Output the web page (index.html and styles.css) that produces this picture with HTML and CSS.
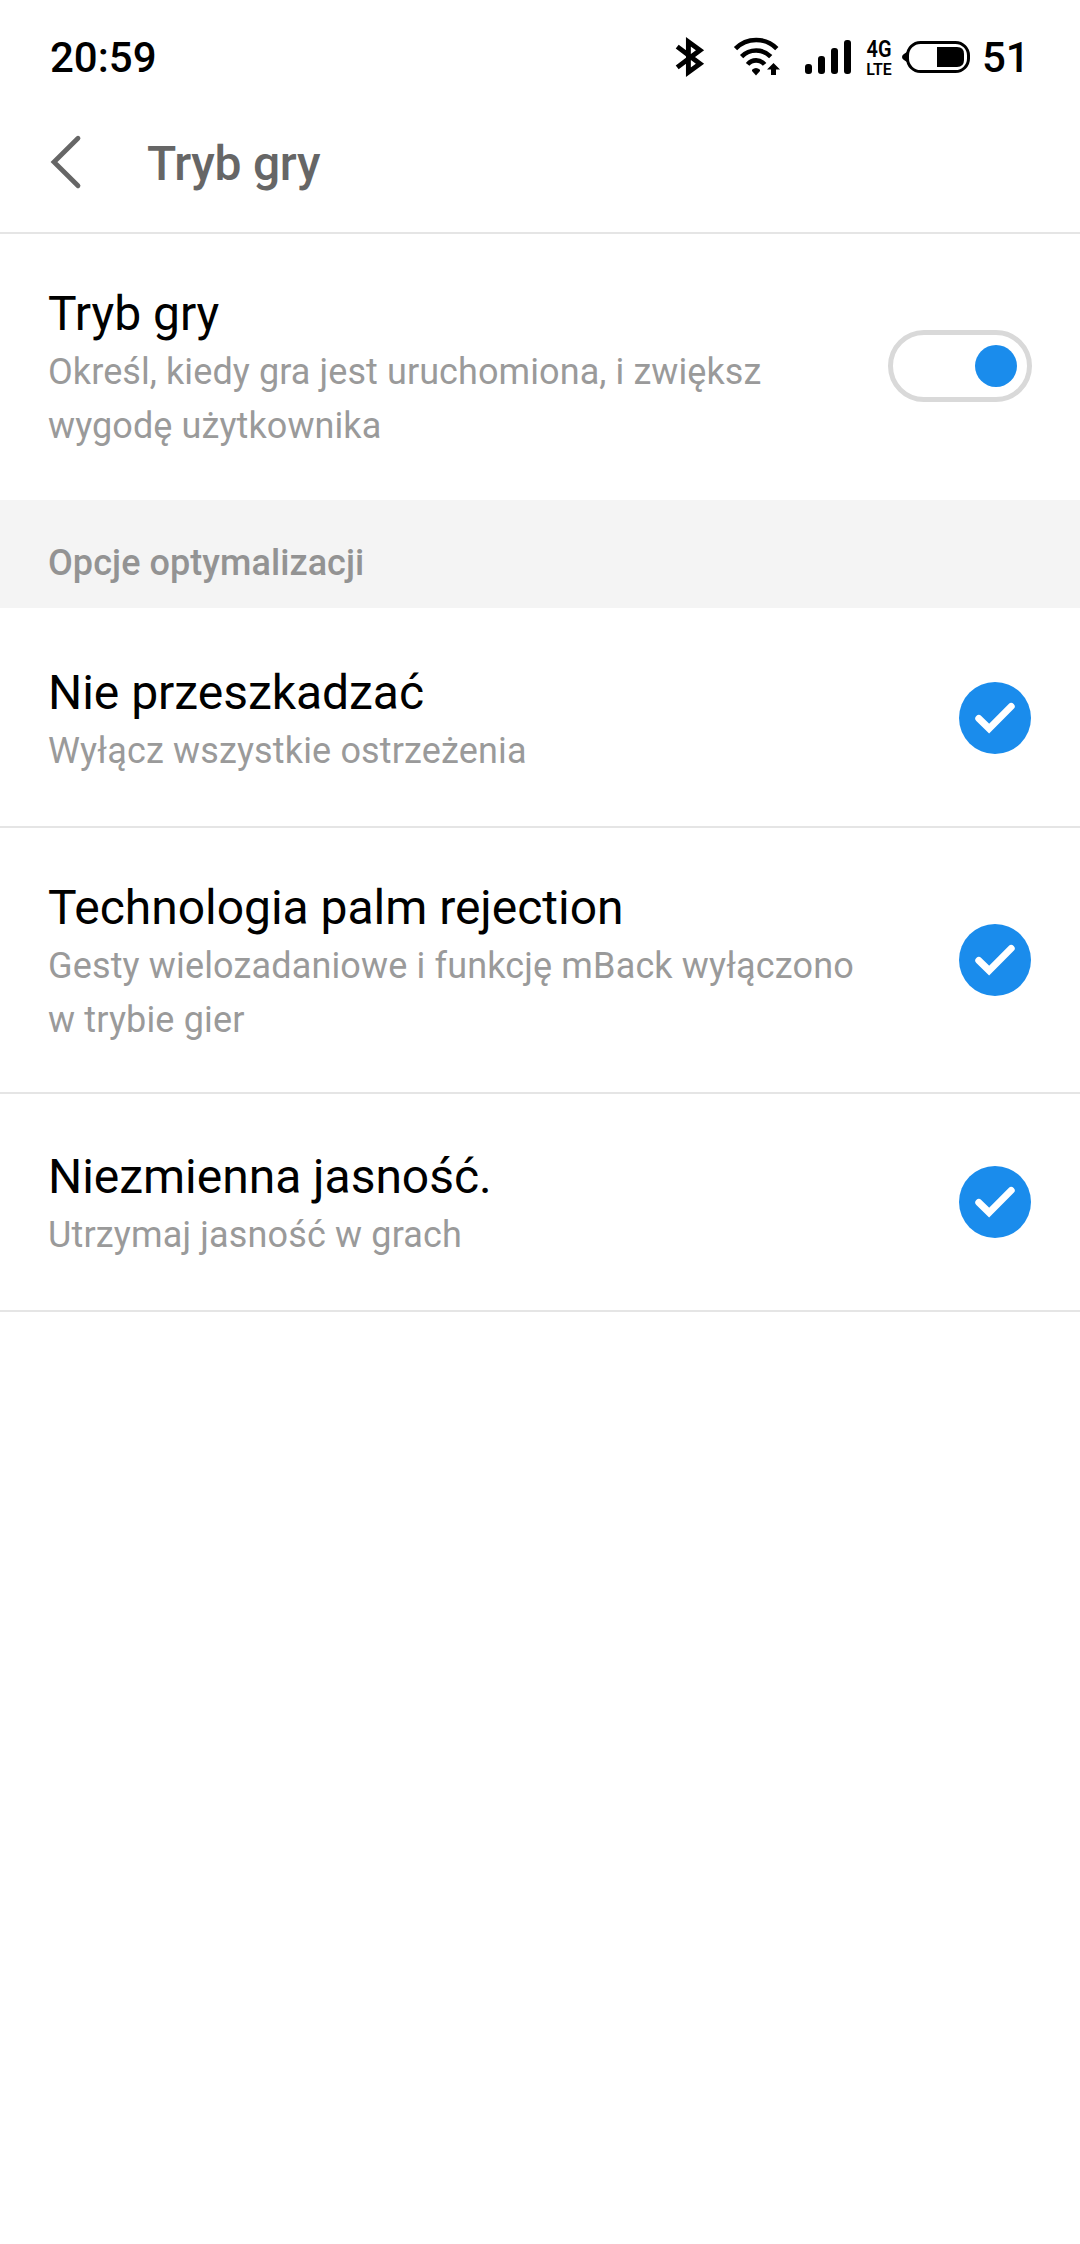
FILE: index.html
```html
<!DOCTYPE html>
<html lang="pl">
<head>
<meta charset="utf-8">
<title>Tryb gry</title>
<link rel="stylesheet" href="styles.css">
</head>
<body>
<svg width="0" height="0" class="defs">
  <symbol id="check" viewBox="0 0 72 72">
    <circle cx="36" cy="36" r="36" fill="#1a8cec"/>
    <path d="M19.8 36.4 30.1 46.6 52.2 24.4" fill="none" stroke="#fff" stroke-width="7" stroke-linecap="round"/>
  </symbol>
</svg>
<div class="statusbar">
  <span class="time">20:59</span>
  <div class="status-icons">
    <svg class="icon-bt" width="32" height="44" viewBox="674 35 32 44"><path d="M677.2 46.6 700 63.7 688.4 72.2V41.8L700 50.3 677.2 67.4" fill="none" stroke="#000" stroke-width="4.9"/></svg>
    <svg class="icon-wifi" width="50" height="44" viewBox="732 35 50 44">
      <g fill="none" stroke="#000" stroke-width="4.6">
        <path d="M735.5 48.6A29 29 0 0 1 776.8 48.6"/>
        <path d="M741.6 56.6A20.5 20.5 0 0 1 770.7 56.6"/>
        <path d="M747.6 64.4A11 11 0 0 1 764.6 64.4"/>
      </g>
      <path d="M752 69.8Q756 66.4 760 69.8V71L756 75.4 752 71Z"/>
      <path d="M773.5 63 780 69.5H776V75H771V69.5H767Z"/>
    </svg>
    <svg class="icon-signal" width="48" height="44" viewBox="804 35 48 44">
      <rect x="805" y="64" width="7" height="10" rx="3"/>
      <rect x="818" y="56" width="7" height="18" rx="3"/>
      <rect x="831" y="48" width="7" height="26" rx="3"/>
      <rect x="844" y="40" width="7" height="34" rx="3"/>
    </svg>
    <svg class="icon-net" width="28" height="50" viewBox="865 32 28 50">
      <text x="866.5" y="57" font-size="23" textLength="25" lengthAdjust="spacingAndGlyphs">4G</text>
      <text x="866.2" y="74.5" font-size="16.5" textLength="25.5" lengthAdjust="spacingAndGlyphs">LTE</text>
    </svg>
    <svg class="icon-battery" width="70" height="44" viewBox="901 35 70 44">
      <rect x="907.5" y="42.5" width="61" height="29" rx="13" fill="none" stroke="#000" stroke-width="3"/>
      <path d="M908 51.5Q906.5 52 903.6 54.2 902 55.4 902 57T903.6 59.8Q906.5 62 908 62.5Z"/>
      <path d="M937 47H957Q964 47 964 54V60Q964 67 957 67H937Z"/>
    </svg>
    <span class="level">51</span>
  </div>
</div>
<header class="header">
  <svg class="back" width="34" height="56" viewBox="48 134 34 56"><path d="M78 138.3 54 162 78 185.7" fill="none" stroke="#666" stroke-width="4.8" stroke-linecap="round"/></svg>
  <h1 class="header-title">Tryb gry</h1>
</header>
<main>
  <div class="row row-main">
    <div class="text"><div class="title">Tryb gry</div><div class="sub">Określ, kiedy gra jest uruchomiona, i zwiększ<br>wygodę użytkownika</div></div>
    <div class="switch"><div class="knob"></div></div>
  </div>
  <h2 class="section">Opcje optymalizacji</h2>
  <div class="row row-first">
    <div class="text"><div class="title">Nie przeszkadzać</div><div class="sub">Wyłącz wszystkie ostrzeżenia</div></div>
    <svg class="check"><use href="#check"/></svg>
  </div>
  <div class="row">
    <div class="text"><div class="title">Technologia palm rejection</div><div class="sub">Gesty wielozadaniowe i funkcję mBack wyłączono<br>w trybie gier</div></div>
    <svg class="check"><use href="#check"/></svg>
  </div>
  <div class="row row-last">
    <div class="text"><div class="title">Niezmienna jasność.</div><div class="sub">Utrzymaj jasność w grach</div></div>
    <svg class="check"><use href="#check"/></svg>
  </div>
</main>
</body>
</html>
```
FILE: styles.css
```css
* { box-sizing: border-box; }
body {
  margin: 0;
  min-height: 2244px;
  background: #fff;
  color: #000;
  font-family: Roboto, "Noto Sans", sans-serif;
}
svg { display: block; flex: none; }
.defs { display: none; }

.statusbar {
  display: flex;
  justify-content: space-between;
  height: 92px;
  padding: 35px 56px 0 50px;
  font-size: 42px;
  font-weight: 500;
  line-height: 46px;
}
.status-icons { display: flex; }
.icon-wifi { margin-left: 26px; }
.icon-signal { margin-left: 22px; }
.icon-net { margin: -3px 0 0 13px; overflow: visible; font-weight: 600; line-height: 1; }
.icon-battery { margin-left: 8px; }
.level { width: 42px; margin-left: 11px; white-space: nowrap; }

.header {
  display: flex;
  height: 142px;
  padding: 42px 48px 0;
  border-bottom: 2px solid #e5e5e5;
  color: #666;
}
.header-title {
  margin: 0 0 0 65px;
  font-size: 48px;
  font-weight: 500;
  letter-spacing: -0.3px;
  line-height: 60px;
}

.row {
  display: flex;
  align-items: center;
  justify-content: space-between;
  height: 266px;
  padding: 0 48px;
  border-bottom: 2px solid #e5e5e5;
}
.row-main { border-bottom-color: transparent; }
.row-first { height: 220px; padding-top: 2px; }
.row-last { height: 218px; }
.text { padding-top: 4px; }
.title { font-size: 48px; letter-spacing: -0.03px; line-height: 62px; }
.sub { color: #9a9a9a; font-size: 36px; letter-spacing: 0.15px; line-height: 54px; }
.row-main .sub { letter-spacing: 0.09px; }
.check { width: 72px; height: 72px; margin-right: 1px; }

.switch {
  display: flex;
  align-items: center;
  justify-content: flex-end;
  width: 144px;
  height: 72px;
  padding-right: 10px;
  border: 5px solid #d9d9d9;
  border-radius: 36px;
}
.knob { width: 42px; height: 42px; border-radius: 50%; background: #1a8cec; }

.section {
  height: 108px;
  margin: 0;
  padding: 36px 48px 0;
  background: #f4f4f4;
  color: #939393;
  font-size: 36px;
  font-weight: 500;
  letter-spacing: 0.07px;
  line-height: 54px;
}
```
